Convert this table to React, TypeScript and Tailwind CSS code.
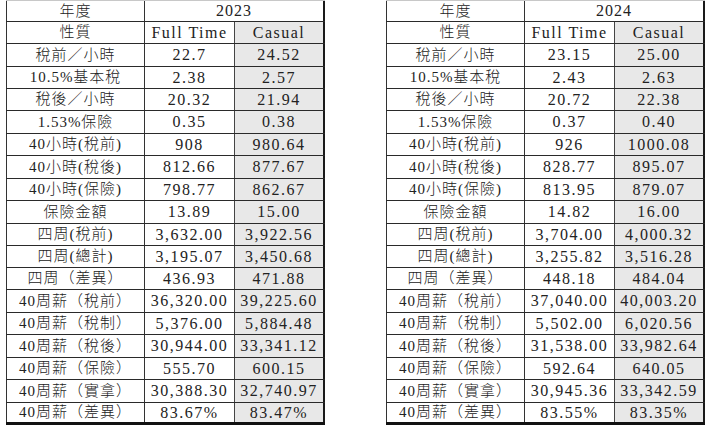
const font = "font-['Liberation_Serif','Noto_Sans_CJK_TC',serif]"

type Row = [string, string, string]

const rows2023: Row[] = [
  ["稅前／小時", "22.7", "24.52"],
  ["10.5%基本稅", "2.38", "2.57"],
  ["稅後／小時", "20.32", "21.94"],
  ["1.53%保險", "0.35", "0.38"],
  ["40小時(稅前)", "908", "980.64"],
  ["40小時(稅後)", "812.66", "877.67"],
  ["40小時(保險)", "798.77", "862.67"],
  ["保險金額", "13.89", "15.00"],
  ["四周(稅前)", "3,632.00", "3,922.56"],
  ["四周(總計)", "3,195.07", "3,450.68"],
  ["四周（差異）", "436.93", "471.88"],
  ["40周薪（稅前）", "36,320.00", "39,225.60"],
  ["40周薪（稅制）", "5,376.00", "5,884.48"],
  ["40周薪（稅後）", "30,944.00", "33,341.12"],
  ["40周薪（保險）", "555.70", "600.15"],
  ["40周薪（實拿）", "30,388.30", "32,740.97"],
  ["40周薪（差異）", "83.67%", "83.47%"],
]

const rows2024: Row[] = [
  ["稅前／小時", "23.15", "25.00"],
  ["10.5%基本稅", "2.43", "2.63"],
  ["稅後／小時", "20.72", "22.38"],
  ["1.53%保險", "0.37", "0.40"],
  ["40小時(稅前)", "926", "1000.08"],
  ["40小時(稅後)", "828.77", "895.07"],
  ["40小時(保險)", "813.95", "879.07"],
  ["保險金額", "14.82", "16.00"],
  ["四周(稅前)", "3,704.00", "4,000.32"],
  ["四周(總計)", "3,255.82", "3,516.28"],
  ["四周（差異）", "448.18", "484.04"],
  ["40周薪（稅前）", "37,040.00", "40,003.20"],
  ["40周薪（稅制）", "5,502.00", "6,020.56"],
  ["40周薪（稅後）", "31,538.00", "33,982.64"],
  ["40周薪（保險）", "592.64", "640.05"],
  ["40周薪（實拿）", "30,945.36", "33,342.59"],
  ["40周薪（差異）", "83.55%", "83.35%"],
]

// row heights picked off the screenshot (it was scaled, so they wobble 22/23)
const heights = [
  "h-[23px]", "h-[22px]", "h-[22px]", "h-[23px]", "h-[22px]", "h-[23px]",
  "h-[22px]", "h-[23px]", "h-[22px]", "h-[22px]", "h-[22px]", "h-[23px]",
  "h-[22px]", "h-[23px]", "h-[22px]", "h-[23px]",
]

const labelCell = "w-[138px] border-l border-[#333] flex items-center justify-center text-[15px] tracking-[1px]"
const ftCell = "w-[90px] border-l border-[#333] flex items-center justify-center tracking-[1.5px]"
const csCell =
  "w-[91px] border-l border-r-2 border-l-[#444] border-r-[#1a1a1a] bg-[#e8e8e8] flex items-center justify-center tracking-[1.5px]"

function PayTable({ year, rows }: { year: string; rows: Row[] }) {
  return (
    <div className="w-[319px] border-t border-[#c8c8c8]">
      <div className="flex h-[21px] border-b border-[#2a2a2a]">
        <div className={labelCell}>年度</div>
        <div className="w-[181px] border-l border-r-2 border-l-[#333] border-r-[#1a1a1a] flex items-center justify-center tracking-[1px]">
          {year}
        </div>
      </div>
      <div className="flex h-[22px] border-b border-[#2a2a2a]">
        <div className={labelCell}>性質</div>
        <div className={ftCell}>Full Time</div>
        <div className={csCell}>Casual</div>
      </div>
      {rows.map(([label, ft, cs], i) => (
        <div
          key={i}
          className={
            i === rows.length - 1
              ? "flex h-[22px] border-b-[3px] border-[#111]"
              : `flex ${heights[i]} border-b border-[#2a2a2a]`
          }
        >
          <div className={labelCell}>{label}</div>
          <div className={ftCell}>{ft}</div>
          <div className={csCell}>{cs}</div>
        </div>
      ))}
    </div>
  )
}

export default function App() {
  return (
    <div
      className={`w-[708px] h-[426px] bg-white overflow-hidden flex gap-[61px] pl-[6px] text-[16px] font-light leading-none text-[#222] ${font}`}
    >
      <PayTable year="2023" rows={rows2023} />
      <PayTable year="2024" rows={rows2024} />
    </div>
  )
}
